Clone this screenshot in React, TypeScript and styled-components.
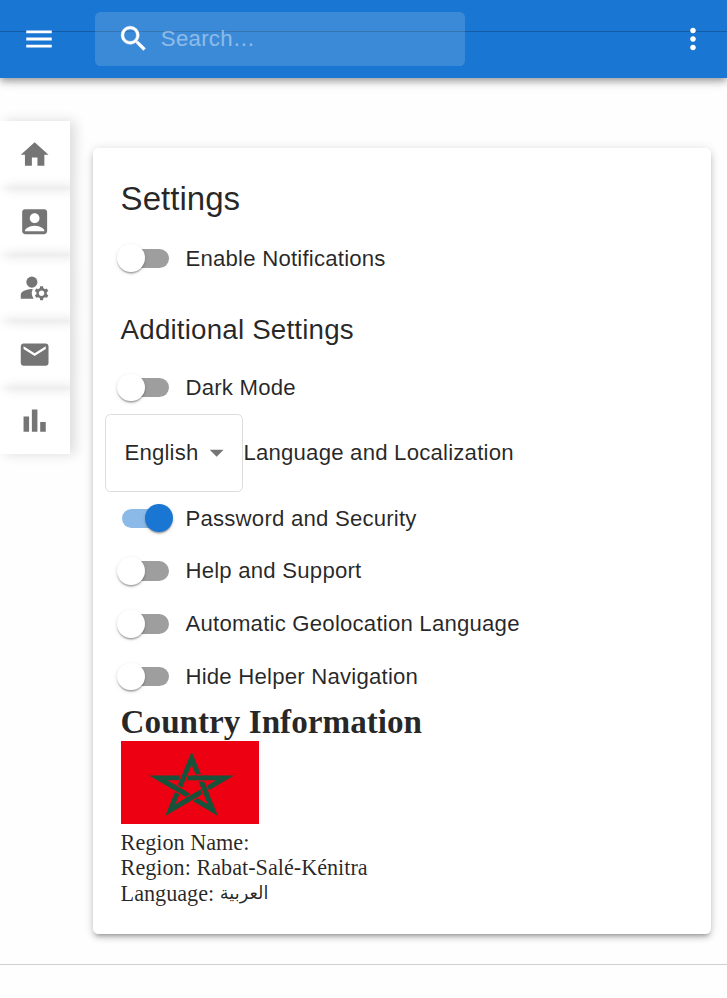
import React, { useState } from "react";
import styled, { createGlobalStyle } from "styled-components";
import {
  MdHome,
  MdAccountBox,
  MdManageAccounts,
  MdMail,
  MdMenu,
  MdSearch,
  MdMoreVert,
  MdArrowDropDown,
} from "react-icons/md";

const GlobalStyle = createGlobalStyle`
  *, *::before, *::after { box-sizing: border-box; }
  body {
    margin: 0;
    background: #fefefe;
    color: rgba(0, 0, 0, 0.85);
    font-family: "Liberation Sans", Arial, sans-serif;
    font-size: 22.2px;
    letter-spacing: 0.0092em;
  }
`;

const Page = styled.div`
  height: 998px;
  display: flex;
  flex-direction: column;
  overflow: hidden;
`;

const AppBar = styled.header`
  position: relative;
  flex: none;
  height: 78px;
  padding: 0 17px 0 22px;
  display: flex;
  align-items: center;
  background: linear-gradient(#145ca5, #145ca5) 0 31px / 100% 1px no-repeat #1976d2;
  box-shadow: 0 3px 6px -1px rgba(0, 0, 0, 0.22), 0 5px 7px rgba(0, 0, 0, 0.14),
    0 1px 14px rgba(0, 0, 0, 0.12);
`;

const IconButton = styled.button`
  display: flex;
  padding: 0;
  border: 0;
  background: none;
  color: #fff;
  font-size: 34px;
`;

const SearchBox = styled.label`
  width: 370px;
  height: 54px;
  margin: 0 auto 0 38.5px;
  padding-left: 22px;
  display: flex;
  align-items: center;
  gap: 11px;
  border-radius: 5.5px;
  background: rgba(255, 255, 255, 0.15);
  color: #fff;
  font-size: 33.3px;
  path:not([fill="none"]) { stroke: currentColor; stroke-width: 0.35px; }
`;

const SearchInput = styled.input`
  width: 260px;
  padding: 0;
  border: 0;
  outline: 0;
  background: none;
  color: #fff;
  font: inherit;
  font-size: 22.2px;
  letter-spacing: 0.013em;
  &::placeholder { color: #fff; opacity: 0.42; }
`;

const Body = styled.div`
  flex: none;
  height: 887px;
  display: flex;
  align-items: flex-start;
  border-bottom: 1px solid #d0d0d0;
`;

const SideNav = styled.nav`
  width: 70px;
  margin: 43.4px 23px 0 0;
  display: flex;
  flex-direction: column;
  background: #fff;
`;

const NavItem = styled.a`
  height: 66.6px;
  display: flex;
  align-items: center;
  justify-content: center;
  color: #757575;
  font-size: 33.3px;
  box-shadow: 5px 0 12px rgba(0, 0, 0, 0.14);
`;

const Card = styled.main`
  width: 618px;
  height: 786px;
  margin-top: 70px;
  padding: 28px 28px 0 27.6px;
  display: flex;
  flex-direction: column;
  align-items: flex-start;
  border-radius: 5.5px;
  background: #fff;
  box-shadow: 0 4px 4px -3px rgba(0, 0, 0, 0.3), 0 4px 6px rgba(0, 0, 0, 0.14),
    0 1px 11px rgba(0, 0, 0, 0.12);
`;

const Title = styled.h1`
  margin: 0.6px 0 11px;
  font-size: 33.1px;
  font-weight: 400;
  line-height: 44.4px;
  letter-spacing: 0;
`;

const Subtitle = styled.h2`
  margin: 23px 0 9.4px;
  font-size: 27.75px;
  font-weight: 400;
  line-height: 44px;
  letter-spacing: 0.0065em;
`;

const SettingRow = styled.label`
  height: 52.75px;
  display: flex;
  align-items: center;
  gap: 16.7px;
  line-height: 33.3px;
`;

const Track = styled.span<{ $on: boolean }>`
  width: 47.2px;
  height: 19.5px;
  margin-left: 1px;
  display: flex;
  align-items: center;
  justify-content: ${(p) => (p.$on ? "flex-end" : "flex-start")};
  border-radius: 10px;
  background: ${(p) => (p.$on ? "#8cbae8" : "#9e9e9e")};
`;

const Thumb = styled.span<{ $on: boolean }>`
  flex: none;
  width: 27.8px;
  height: 27.8px;
  margin: 0 -4.2px;
  border-radius: 50%;
  background: ${(p) => (p.$on ? "#1976d2" : "#fff")};
  box-shadow: 0 2.5px 1.5px -1px rgba(0, 0, 0, 0.2), 0 1.4px 1.5px rgba(0, 0, 0, 0.14),
    0 1.4px 4px rgba(0, 0, 0, 0.12);
`;

const LanguageRow = styled.div`
  height: 78px;
  margin-left: -15.6px;
  display: flex;
  align-items: center;
`;

const SelectBox = styled.button`
  width: 138.4px;
  height: 78px;
  padding: 0 9px 0 18.4px;
  display: flex;
  align-items: center;
  justify-content: space-between;
  border: 1.4px solid #dcdcdc;
  border-radius: 5.5px;
  background: #fff;
  color: inherit;
  font: inherit;
  letter-spacing: inherit;
`;

const Caret = styled(MdArrowDropDown)`
  color: #757575;
  font-size: 33.3px;
`;

const Country = styled.section`
  font-family: "Liberation Serif", "Times New Roman", serif;
  letter-spacing: 0;
  line-height: 25.6px;
`;

const CountryTitle = styled.h2`
  margin: 0;
  font-size: 33.2px;
  line-height: 38px;
`;

const Arabic = styled.span`
  display: inline-block;
  font-family: "DejaVu Sans", sans-serif;
  font-size: 17.8px;
  line-height: 1;
  vertical-align: 2px;
`;

const LanguageLine = styled.div`
  height: 25.6px;
`;

const FlagSvg = styled.svg`
  display: block;
  margin-bottom: 5.5px;
`;

const navIcons = [
  { name: "Home", icon: <MdHome /> },
  { name: "Profile", icon: <MdAccountBox /> },
  { name: "Account", icon: <MdManageAccounts /> },
  { name: "Mail", icon: <MdMail /> },
  {
    name: "Statistics",
    icon: (
      <svg width="1em" height="1em" viewBox="0 0 24 24" fill="currentColor">
        <path d="M4 9h4v11H4zm12 4h4v7h-4zm-6-9h4v16h-4z" />
      </svg>
    ),
  },
];

// Short stretches of each band that pass over another one.
const crossings =
  "M192.6 99 182.6 123M225 111H250M161.7 140.3 184.1 153.3M247 134.8 256.8 158.9M223.5 163.6 201.1 176.6";

const Flag = () => (
  <FlagSvg width="138.6" height="83.4" viewBox="0 0 416 251" preserveAspectRatio="none">
    <path fill="#ec0012" d="M0 0h416v251H0z" />
    <g fill="none" stroke="#17533a" strokeWidth="15">
      <path strokeMiterlimit="10" d="M212 52 276 208 112 111H312L148 208Z" />
      <path d={crossings} stroke="#ec0012" strokeWidth="22" />
      <path d={crossings} strokeLinecap="square" />
    </g>
  </FlagSvg>
);

const Setting = ({ label, initial = false }: { label: string; initial?: boolean }) => {
  const [on, setOn] = useState(initial);
  return (
    <SettingRow onClick={() => setOn(!on)}>
      <Track $on={on} role="switch" aria-checked={on}>
        <Thumb $on={on} />
      </Track>
      {label}
    </SettingRow>
  );
};

export default function App() {
  return (
    <>
      <GlobalStyle />
      <Page>
        <AppBar>
          <IconButton aria-label="Menu"><MdMenu /></IconButton>
          <SearchBox>
            <MdSearch />
            <SearchInput placeholder="Search…" />
          </SearchBox>
          <IconButton aria-label="More"><MdMoreVert /></IconButton>
        </AppBar>
        <Body>
          <SideNav>
            {navIcons.map((n) => (
              <NavItem key={n.name} aria-label={n.name}>{n.icon}</NavItem>
            ))}
          </SideNav>
          <Card>
            <Title>Settings</Title>
            <Setting label="Enable Notifications" />
            <Subtitle>Additional Settings</Subtitle>
            <Setting label="Dark Mode" />
            <LanguageRow>
              <SelectBox>English<Caret /></SelectBox>
              Language and Localization
            </LanguageRow>
            <Setting label="Password and Security" initial />
            <Setting label="Help and Support" />
            <Setting label="Automatic Geolocation Language" />
            <Setting label="Hide Helper Navigation" />
            <Country>
              <CountryTitle>Country Information</CountryTitle>
              <Flag />
              <div>Region Name:</div>
              <div>Region: Rabat-Salé-Kénitra</div>
              <LanguageLine>Language: <Arabic>العربية</Arabic></LanguageLine>
            </Country>
          </Card>
        </Body>
      </Page>
    </>
  );
}
